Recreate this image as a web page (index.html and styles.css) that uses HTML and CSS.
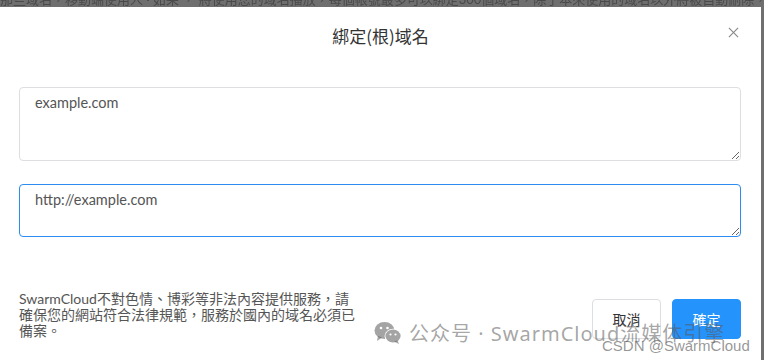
FILE: index.html
```html
<!DOCTYPE html>
<html>
	<head>
		<title>綁定(根)域名</title>
		<link rel="stylesheet" href="styles.css">
	</head>
	<body>
		<div class="backdrop">
			<div class="behind">那些域名，移動端使用人 · 如果 ， 將使用您的域名播放，每個帳號最多可以綁定300個域名，除了本來使用的域名以外將被自動刪除，如需要</div>
		</div>
		<div class="dialog">
			<div class="header">
				<span class="title">綁定(根)域名</span>
				<svg class="close" viewBox="0 0 12 12">
					<line x1="1" y1="1" x2="11" y2="11" />
					<line x1="11" y1="1" x2="1" y2="11" />
				</svg>
			</div>
			<div class="body">
				<textarea class="field tall">example.com</textarea>
				<textarea class="field short focus">http://example.com</textarea>
			</div>
			<div class="footer">
				<p class="notice">SwarmCloud不對色情、博彩等非法內容提供服務，請確保您的網站符合法律規範，服務於國內的域名必須已備案。</p>
				<div class="buttons">
					<button class="btn">取消</button>
					<button class="btn primary">確定</button>
				</div>
			</div>
			<div class="mark">
				<svg class="wechat" viewBox="0 0 28 24">
					<ellipse cx="10.5" cy="9.5" rx="10" ry="8.5" />
					<path d="M4 15 L3 20 L8 16.5 Z" />
					<ellipse cx="19" cy="15" rx="8.5" ry="7.2" fill="#fff" />
					<ellipse cx="19" cy="15" rx="7.6" ry="6.4" />
					<path d="M23.5 19.5 L25 23 L20 20.5 Z" />
					<circle cx="7" cy="7" r="1.3" fill="#fff" />
					<circle cx="13.5" cy="7" r="1.3" fill="#fff" />
					<circle cx="16.5" cy="13.5" r="1.1" fill="#fff" />
					<circle cx="21.5" cy="13.5" r="1.1" fill="#fff" />
				</svg>
				<span>公众号 · SwarmCloud流媒体引擎</span>
			</div>
			<div class="csdn">CSDN @SwarmCloud</div>
		</div>
	</body>
</html>
```

FILE: styles.css
```css
html, body {
	margin: 0;
	height: 360px;
	overflow: hidden;
}

body {
	background-color: #6f6f6f;
	font-family: Lato, "Noto Sans CJK TC", sans-serif;
}

.backdrop {
	height: 7px;
	overflow: hidden;
}

.behind {
	font-size: 13px;
	line-height: 13px;
	margin-top: -7px;
	white-space: nowrap;
	color: #4a4a4a;
	filter: blur(0.6px);
}

.dialog {
	position: relative;
	width: 761px;
	height: 353px;
	background-color: #fff;
}

.header {
	position: relative;
	height: 56px;
	display: flex;
	justify-content: center;
	align-items: center;
}

.title {
	font-family: "Noto Sans CJK TC", sans-serif;
	font-size: 17px;
	color: #333;
}

.close {
	position: absolute;
	right: 22px;
	top: 20px;
	width: 11px;
	height: 11px;
	stroke: #888;
	stroke-width: 1.2;
}

.body {
	display: flex;
	flex-direction: column;
	gap: 23px;
	padding: 24px 20px 0 19px;
}

.field {
	display: block;
	box-sizing: border-box;
	width: 100%;
	margin: 0;
	padding: 5px 15px;
	border: 1px solid #dcdee2;
	border-radius: 4px;
	font-family: Lato, sans-serif;
	font-size: 14.5px;
	line-height: 20px;
	color: #555;
	outline: none;
}

.field.tall {
	height: 74px;
}

.field.short {
	height: 53px;
}

.field.focus {
	border-color: #2d8cf0;
}

.footer {
	display: flex;
	justify-content: space-between;
	align-items: flex-end;
	padding: 0 20px 0 19px;
	margin-top: 54px;
}

.notice {
	margin: 0;
	width: 338px;
	font-size: 14px;
	line-height: 16px;
	color: #555;
}

.buttons {
	display: flex;
	gap: 11px;
}

.btn {
	width: 69px;
	height: 40px;
	border: 1px solid #dcdee2;
	border-radius: 4px;
	background-color: #fff;
	font-family: "Noto Sans CJK TC", sans-serif;
	font-size: 14px;
	color: #333;
}

.btn.primary {
	border-color: #2593fc;
	background-color: #2593fc;
	color: #fff;
}

.mark {
	position: absolute;
	left: 374px;
	top: 311px;
	display: flex;
	align-items: center;
	gap: 7px;
	color: rgba(90, 90, 90, 0.55);
	font-family: "Noto Sans", "Noto Sans CJK SC", sans-serif;
	font-size: 20px;
	letter-spacing: 1px;
	white-space: nowrap;
}

.wechat {
	width: 28px;
	height: 24px;
	fill: rgba(90, 90, 90, 0.55);
}

.csdn {
	position: absolute;
	left: 602px;
	top: 330px;
	color: rgba(80, 80, 80, 0.6);
	font-family: "Liberation Sans", sans-serif;
	font-size: 15px;
	white-space: nowrap;
}
```
